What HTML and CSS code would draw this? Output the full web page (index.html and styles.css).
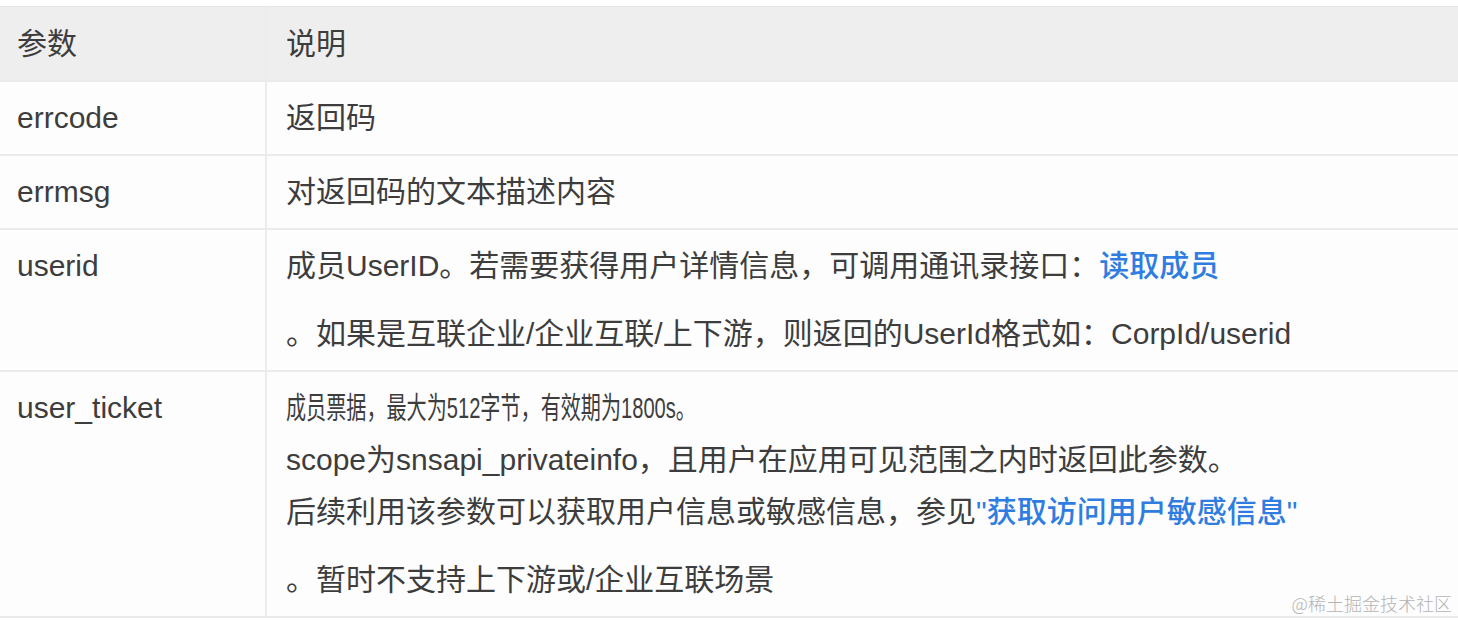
FILE: index.html
```html
<!DOCTYPE html>
<html lang="zh-CN">
    <head>
        <title>返回参数</title>
        <meta charset="utf-8">
        <meta name="viewport" content="width=device-width, initial-scale=1">
        <link rel="stylesheet" href="styles.css">
    </head>
    <body>
        <table class="params">
            <thead>
                <tr>
                    <th class="col-name">参数</th>
                    <th>说明</th>
                </tr>
            </thead>
            <tbody>
                <tr>
                    <td class="col-name">errcode</td>
                    <td>返回码</td>
                </tr>
                <tr>
                    <td class="col-name">errmsg</td>
                    <td>对返回码的文本描述内容</td>
                </tr>
                <tr>
                    <td class="col-name">userid</td>
                    <td>
                        <div>成员UserID。若需要获得用户详情信息，可调用通讯录接口：<a href="#">读取成员</a></div>
                        <p class="tail">。如果是互联企业/企业互联/上下游，则返回的UserId格式如：CorpId/userid</p>
                    </td>
                </tr>
                <tr>
                    <td class="col-name">user_ticket</td>
                    <td>
                        <div><span class="narrow">成员票据，最大为512字节，有效期为1800s。</span></div>
                        <div>scope为snsapi_privateinfo，且用户在应用可见范围之内时返回此参数。</div>
                        <div>后续利用该参数可以获取用户信息或敏感信息，参见<a href="#">"获取访问用户敏感信息"</a></div>
                        <p class="tail">。暂时不支持上下游或/企业互联场景</p>
                    </td>
                </tr>
            </tbody>
        </table>
        <div class="watermark">@稀土掘金技术社区</div>
    </body>
</html>
```

FILE: styles.css
```css
html, body {
    margin: 0;
    padding: 0;
    background-color: #fff;
}

body {
    position: relative;
    padding-top: 6px;
    min-height: 614px;
    font-family: "Liberation Sans", "Noto Sans CJK SC", sans-serif;
    font-size: 30px;
    color: #3d3d3d;
}

.params {
    width: 100%;
    border-collapse: collapse;
    background-color: #fdfdfd;
}

.params th,
.params td {
    padding: 10px 19px;
    line-height: 52px;
    text-align: left;
    vertical-align: top;
    border-bottom: 2px solid #ebebeb;
    border-left: 2px solid #ececec;
}

.params th {
    padding-top: 11px;
    font-weight: normal;
    background-color: #eeeeee;
    border-top: 1px solid #e4e4e4;
}

.params .col-name {
    width: 229px;
    padding-left: 17px;
    border-left: none;
}

.params a {
    color: #2f7de1;
    font-weight: 500;
    text-decoration: none;
}

.params p {
    margin: 0;
}

.tail {
    margin-top: 16px !important;
}

/* this line is squeezed in the original screenshot */
.narrow {
    display: inline-block;
    white-space: nowrap;
    transform: scaleX(0.67);
    transform-origin: left center;
}

.watermark {
    position: absolute;
    right: 6px;
    bottom: 4px;
    font-family: "Noto Sans CJK SC", sans-serif;
    font-size: 18px;
    font-weight: 300;
    color: #b4b4b4;
}
```
